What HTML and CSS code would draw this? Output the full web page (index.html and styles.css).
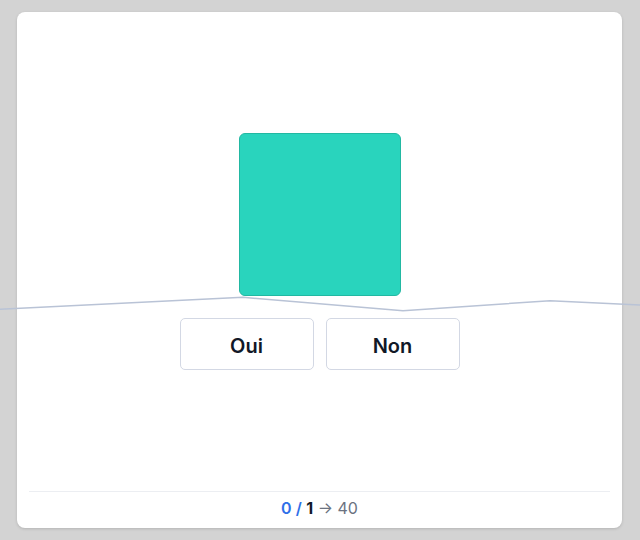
FILE: index.html
```html
<!DOCTYPE html>
<html>
<head>
<meta charset="utf-8">
<link rel="stylesheet" href="styles.css">
</head>
<body>
<div class="page">
  <div class="card">
    <div class="stage">
      <div class="swatch"></div>
      <div class="choices">
        <button class="choice">Oui</button>
        <button class="choice">Non</button>
      </div>
    </div>
    <div class="footer">
      <span class="score">0 /</span> <span class="total">1</span> <span class="goal">→ 40</span>
    </div>
  </div>
  <svg class="trace" width="640" height="540" viewBox="0 0 640 540">
    <polyline points="0,309.3 243,297.3 403,310.7 550,300.7 640,305" fill="none" stroke="#b9c3d6" stroke-width="1.5"/>
  </svg>
</div>
</body>
</html>
```
FILE: styles.css
```css
html, body {
  margin: 0;
  padding: 0;
  background: #d3d3d3;
  font-family: Inter, "Noto Sans", sans-serif;
}
.page {
  position: relative;
  width: 640px;
  height: 540px;
  box-sizing: border-box;
  padding: 12px 18px 12px 17px;
}
.card {
  height: 516px;
  background: #ffffff;
  border-radius: 8px;
  box-shadow: 0 1px 3px rgba(0,0,0,0.15);
  display: flex;
  flex-direction: column;
  padding: 0 12px;
  box-sizing: border-box;
}
.stage {
  flex: 1;
  display: flex;
  flex-direction: column;
  align-items: center;
  justify-content: center;
  gap: 22px;
}
.swatch {
  width: 160px;
  height: 161px;
  background: #29d4bd;
  border: 1px solid #22b8a2;
  border-radius: 6px;
}
.choices {
  display: flex;
  gap: 12px;
}
.choice {
  width: 134px;
  height: 52px;
  background: #ffffff;
  border: 1.5px solid #d3d8e4;
  border-radius: 5px;
  font-family: Inter, "Noto Sans", sans-serif;
  font-size: 20px;
  font-weight: 600;
  color: #111827;
  padding: 3px 0 0;
}
.footer {
  border-top: 1px solid #eceef2;
  text-align: center;
  padding: 6px 0 10px;
  font-size: 16px;
  line-height: 20px;
}
.score {
  color: #2f6fe8;
  font-weight: 600;
}
.total {
  color: #111827;
  font-weight: 700;
}
.goal {
  color: #6b7280;
}
.trace {
  position: absolute;
  left: 0;
  top: 0;
  pointer-events: none;
}
```
